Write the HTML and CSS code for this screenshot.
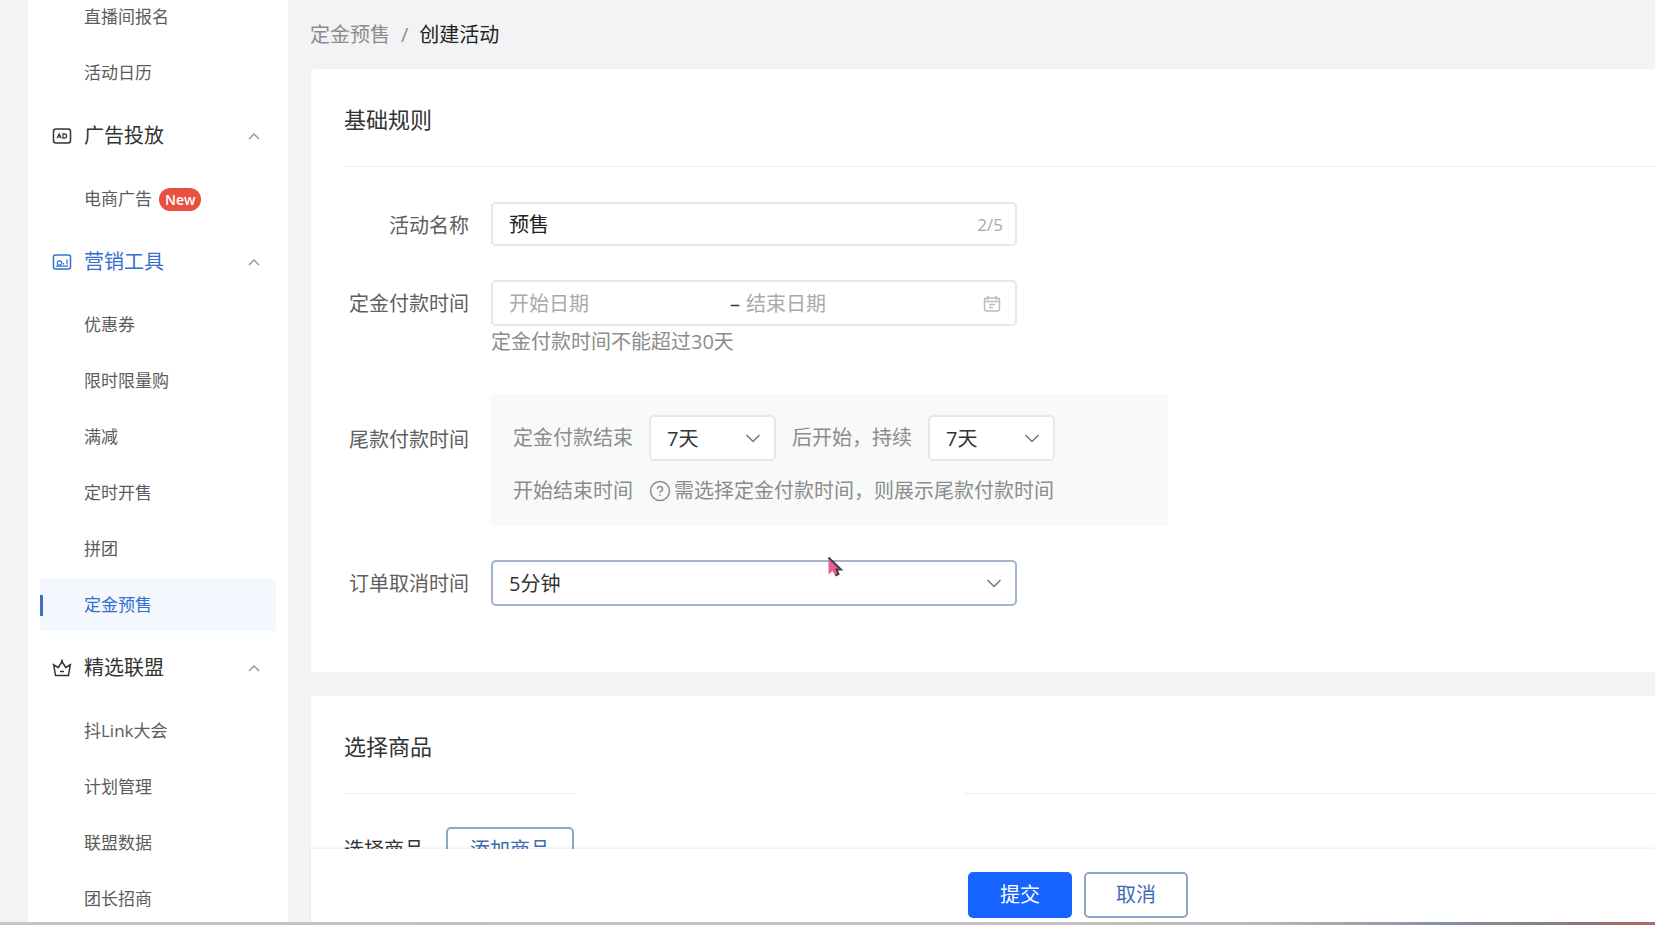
FILE: index.html
```html
<!DOCTYPE html>
<html lang="zh-CN">
<head>
<meta charset="utf-8">
<title>创建活动</title>
<link rel="stylesheet" href="styles.css">
</head>
<body>
<div class="app">
  <div class="shell">
    <nav class="sidebar" aria-label="主菜单">
      <div class="menu">
        <a class="item" href="#">直播间报名</a>
        <a class="item" href="#">活动日历</a>
        <button class="group" type="button">
          <svg class="group-icon" viewBox="0 0 20 20"><rect x="1.5" y="3" width="17" height="14" rx="2.5"/><path class="thin" d="M5 12.2l2.2-4.4 2 4.4M6 11h2.6M11 7.8v4.4h1.4a2.2 2.2 0 0 0 0-4.4z"/></svg>
          <span class="group-name">广告投放</span>
          <svg class="chevron" viewBox="0 0 14 14"><path d="M2 10l5-5 5 5"/></svg>
        </button>
        <a class="item" href="#">电商广告<span class="badge">New</span></a>
        <button class="group current" type="button">
          <svg class="group-icon" viewBox="0 0 20 20"><rect x="1.5" y="3" width="17" height="14" rx="2"/><circle class="thin" cx="7.5" cy="11" r="2.2"/><path class="thin" d="M4 14.200h12M11.500 12.500V11M15 12.500V7.500"/></svg>
          <span class="group-name">营销工具</span>
          <svg class="chevron" viewBox="0 0 14 14"><path d="M2 10l5-5 5 5"/></svg>
        </button>
        <a class="item" href="#">优惠券</a>
        <a class="item" href="#">限时限量购</a>
        <a class="item" href="#">满减</a>
        <a class="item" href="#">定时开售</a>
        <a class="item" href="#">拼团</a>
        <a class="item active" href="#" aria-current="page">定金预售</a>
        <button class="group" type="button">
          <svg class="group-icon" viewBox="0 0 20 20"><path d="M3.500 17.500h13L18.200 7l-4.500 2.500L10 3.500 6.300 9.500 1.800 7zM8 13.500h4"/><path d="M10 1.500v2M1 6l1 1M19 6l-1 1"/></svg>
          <span class="group-name">精选联盟</span>
          <svg class="chevron" viewBox="0 0 14 14"><path d="M2 10l5-5 5 5"/></svg>
        </button>
        <a class="item" href="#">抖Link大会</a>
        <a class="item" href="#">计划管理</a>
        <a class="item" href="#">联盟数据</a>
        <a class="item" href="#">团长招商</a>
      </div>
    </nav>

    <main class="main">
      <div class="scroll">
        <nav class="breadcrumb" aria-label="面包屑">
          <a href="#">定金预售</a><span class="sep">/</span><span class="here">创建活动</span>
        </nav>

        <section class="card rules">
          <h2 class="card-title">基础规则</h2>
          <hr class="divider">
          <form class="form">
            <label class="label" for="name">活动名称</label>
            <div class="field box name-box">
              <input class="text-input" id="name" type="text" value="预售" maxlength="5">
              <span class="count">2/5</span>
            </div>

            <label class="label" for="start">定金付款时间</label>
            <div class="field">
              <div class="box range-box">
                <input class="text-input range-start" id="start" type="text" placeholder="开始日期">
                <span class="dash">–</span>
                <input class="text-input range-end" type="text" placeholder="结束日期" aria-label="结束日期">
                <svg class="calendar" viewBox="0 0 18 18"><rect x="1.500" y="3" width="15" height="13" rx="2"/><path d="M1.500 6.500h15M5 1v4M13 1v4M6 9.500h6M6 12.500h4"/></svg>
              </div>
              <p class="hint">定金付款时间不能超过30天</p>
            </div>

            <label class="label panel-label" for="delay">尾款付款时间</label>
            <div class="panel">
              <div class="panel-row">
                <span>定金付款结束</span>
                <span class="select short">
                  <select id="delay"><option>7天</option></select>
                  <svg class="arrow" viewBox="0 0 16 16"><path d="M1.500 5L8 11.500 14.500 5"/></svg>
                </span>
                <label for="duration">后开始，持续</label>
                <span class="select short">
                  <select id="duration"><option>7天</option></select>
                  <svg class="arrow" viewBox="0 0 16 16"><path d="M1.500 5L8 11.500 14.500 5"/></svg>
                </span>
              </div>
              <div class="panel-row note-row">
                <span>开始结束时间</span>
                <span class="note">
                  <svg class="help" viewBox="0 0 22 22"><circle cx="11" cy="11" r="9.500"/><path d="M8.500 9a2.500 2.500 0 1 1 3.600 2.200c-.8.400-1.100.8-1.100 1.600M11 14.500v1.500"/></svg>
                  需选择定金付款时间，则展示尾款付款时间
                </span>
              </div>
            </div>

            <label class="label" for="cancel">订单取消时间</label>
            <span class="field select focus">
              <select id="cancel"><option>5分钟</option></select>
              <svg class="arrow" viewBox="0 0 16 16"><path d="M1.500 5L8 11.500 14.500 5"/></svg>
              <svg class="pointer" viewBox="0 0 16 22"><path class="pointer-fill" d="M1.500 1.500v17l4-3.500 3 5 3-1.500-2-4.500h4.500z"/><path class="pointer-edge" d="M1.500 1.500L14 13.500H9.500l2 4.500-3 1.500"/></svg>
            </span>
          </form>
        </section>

        <section class="card goods">
          <h2 class="card-title">选择商品</h2>
          <div class="split-divider"><hr class="divider"><hr class="divider"></div>
          <div class="goods-row">
            <span>选择商品</span>
            <button class="btn add" type="button">添加商品</button>
          </div>
        </section>
      </div>

      <footer class="actions">
        <button class="btn primary" type="submit">提交</button>
        <button class="btn" type="button">取消</button>
      </footer>
    </main>
  </div>
  <div class="edge"></div>
</div>
</body>
</html>
```

FILE: styles.css
```css
* {
  box-sizing: border-box;
}

body {
  margin: 0;
  background: #f1f3f4;
  color: #333;
  font-family: "Open Sans", "Noto Sans CJK SC", sans-serif;
  font-size: 20px;
  line-height: 28px;
}

button,
input,
select {
  font: inherit;
  color: inherit;
}

a {
  color: inherit;
  text-decoration: none;
}

svg {
  flex: none;
  fill: none;
  stroke: currentColor;
  stroke-width: 1.5;
}

.app {
  display: flex;
  flex-direction: column;
  height: 100vh;
  overflow: hidden;
}

.shell {
  display: flex;
  flex: 1;
  min-height: 0;
}

.edge {
  height: 3px;
  background: linear-gradient(90deg, #c4c6c6 0%, #c6c0be 30%, #c9c5c3 60%, #b9b9c0 76%, #8390a0 88%, #8d7b7b 95%, #b86468 100%);
}

/* Sidebar */

.sidebar {
  flex: none;
  width: 260px;
  margin-left: 28px;
  padding: 0 12px;
  overflow: hidden;
  background: #fff;
}

.menu {
  display: flex;
  flex-direction: column;
  margin-top: -11px;
}

.item {
  display: flex;
  flex: none;
  align-items: center;
  height: 52px;
  margin: 2px 0;
  padding-left: 44px;
  color: #5c5c5c;
  font-size: 17px;
}

.item.active {
  position: relative;
  background: #f3f8ff;
  color: #2f6fd0;
}

.item.active::before {
  content: "";
  position: absolute;
  left: 0;
  width: 3px;
  height: 21px;
  background: #3f6fc4;
}

.badge {
  margin-left: 7px;
  padding: 0 6px;
  border-radius: 12px;
  background: #e9503f;
  color: #fff;
  font-size: 14px;
  font-weight: 600;
  line-height: 23px;
}

.group {
  display: flex;
  flex: none;
  align-items: center;
  height: 70px;
  padding: 0 15px 0 12px;
  border: 0;
  background: none;
  color: #333;
}

.group-icon {
  width: 20px;
  height: 20px;
  margin-right: 12px;
}

.group-name {
  margin-right: auto;
}

.group.current {
  color: #3370d0;
}

.thin {
  stroke-width: 1.2;
}

.chevron {
  width: 14px;
  height: 14px;
  color: #999;
}

/* Main column */

.main {
  display: flex;
  flex: 1;
  flex-direction: column;
  min-width: 0;
  padding-left: 23px;
  background: #f1f3f4;
}

.scroll {
  flex: 1;
  min-height: 0;
  overflow: hidden;
}

.breadcrumb {
  display: flex;
  align-items: center;
  height: 69px;
  margin-left: -1px;
  color: #8c8c8c;
}

.sep {
  margin: 0 11px;
}

.here {
  color: #222;
}

.card {
  padding: 35px 0 0 33px;
  background: #fff;
}

.rules {
  padding-bottom: 64px;
  border-radius: 4px 0 0 0;
}

.goods {
  margin-top: 24px;
}

.card-title {
  margin: 0 0 32px;
  color: #333;
  font-size: 22px;
  font-weight: 400;
  line-height: 30px;
}

.divider {
  height: 1px;
  margin: 0;
  border: 0;
  background: #ececec;
}

.form {
  display: grid;
  grid-template-columns: 125px minmax(0, 677px);
  column-gap: 22px;
  padding-top: 35px;
}

.label {
  color: #606060;
  line-height: 48px;
  text-align: right;
}

.panel-label {
  padding-top: 22px;
}

.field {
  width: 100%;
  max-width: 526px;
}

.box {
  display: flex;
  align-items: center;
  height: 44px;
  padding: 2px 14px 0 16px;
  border: 2px solid #e8e8e8;
  border-radius: 5px;
  background: #fff;
}

.name-box {
  margin-bottom: 34px;
  padding-right: 12px;
}

.range-box {
  height: 46px;
}

.text-input {
  min-width: 0;
  padding: 0;
  border: 0;
  outline: 0;
  background: none;
}

.name-box .text-input {
  flex: 1;
  color: #222;
}

.text-input::placeholder {
  color: #aaa;
  opacity: 1;
}

.count {
  color: #aaa;
  font-size: 17px;
}

.range-start {
  width: 221px;
}

.dash {
  margin-right: 6px;
}

.range-end {
  flex: 1;
}

.calendar {
  width: 18px;
  height: 18px;
  color: #bbb;
}

.hint {
  margin: 2px 0 38px;
  color: #8c8c8c;
}

.panel {
  margin-bottom: 34px;
  padding: 21px 22px;
  background: #f8f9f9;
  color: #8c8c8c;
}

.panel-row {
  display: flex;
  align-items: center;
  gap: 16px;
}

.note-row {
  margin-top: 16px;
}

.note {
  display: flex;
  align-items: center;
  gap: 3px;
}

.help {
  width: 22px;
  height: 22px;
}

.select {
  position: relative;
  display: block;
  height: 46px;
}

.select select {
  width: 100%;
  height: 100%;
  padding: 2px 16px 0;
  border: 2px solid #e8e8e8;
  border-radius: 5px;
  outline: 0;
  appearance: none;
  background: #fff;
  color: #333;
}

.short {
  width: 127px;
}

.focus select {
  border-color: #a3b4cb;
}

.arrow {
  position: absolute;
  top: 15px;
  right: 15px;
  width: 16px;
  height: 16px;
  color: #777;
  pointer-events: none;
}

.pointer {
  position: absolute;
  top: -4px;
  left: 336px;
  width: 16px;
  height: 22px;
}

.pointer-fill {
  fill: #ee5a9c;
  stroke: none;
}

.pointer-edge {
  stroke: #444;
  stroke-width: 2;
}

.split-divider {
  display: grid;
  grid-template-columns: 232px 1fr;
  column-gap: 389px;
}

.goods-row {
  display: flex;
  align-items: center;
  gap: 22px;
  padding-top: 33px;
}

.btn {
  width: 104px;
  height: 46px;
  padding: 0;
  border: 2px solid #8ea6c9;
  border-radius: 5px;
  background: #fff;
  color: #3d6cb5;
}

.btn.add {
  width: 128px;
}

.btn.primary {
  border-color: #1664ff;
  background: #1664ff;
  color: #fff;
}

.actions {
  position: relative;
  display: flex;
  flex: none;
  align-items: center;
  justify-content: center;
  gap: 12px;
  padding: 23px 0 4px 190px;
  background: #fff;
  box-shadow: 0 -1px 3px rgba(0, 0, 0, 0.08);
}
```
